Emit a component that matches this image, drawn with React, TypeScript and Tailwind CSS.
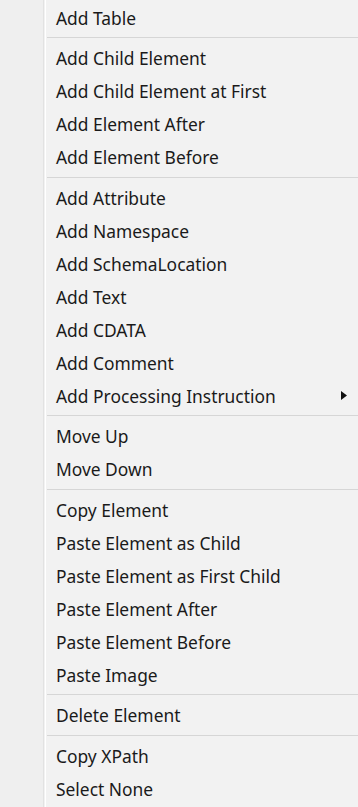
const groups: { label: string; sub?: boolean }[][] = [
  [{ label: "Add Table" }],
  [
    { label: "Add Child Element" },
    { label: "Add Child Element at First" },
    { label: "Add Element After" },
    { label: "Add Element Before" },
  ],
  [
    { label: "Add Attribute" },
    { label: "Add Namespace" },
    { label: "Add SchemaLocation" },
    { label: "Add Text" },
    { label: "Add CDATA" },
    { label: "Add Comment" },
    { label: "Add Processing Instruction", sub: true },
  ],
  [{ label: "Move Up" }, { label: "Move Down" }],
  [
    { label: "Copy Element" },
    { label: "Paste Element as Child" },
    { label: "Paste Element as First Child" },
    { label: "Paste Element After" },
    { label: "Paste Element Before" },
    { label: "Paste Image" },
  ],
  [{ label: "Delete Element" }],
  [{ label: "Copy XPath" }, { label: "Select None" }],
];

export default function App() {
  return (
    <div
      className="relative w-[358px] h-[807px] overflow-hidden bg-[#f2f2f2] text-[#1a1a1a]"
      style={{ fontFamily: '"Noto Sans", "Noto Sans CJK KR", sans-serif' }}
    >
      {/* icon gutter */}
      <div className="absolute left-0 top-0 bottom-0 w-[44px] bg-[#efefef] border-r border-[#e2e2e2]" />
      <div className="absolute left-[45px] top-0 bottom-0 w-px bg-white" />

      <div className="relative pt-[1px]">
        {groups.map((group, gi) => (
          <div key={gi}>
            {gi > 0 && <div className="ml-[47px] mt-[3px] mb-[3.5px] h-px bg-[#d6d6d6]" />}
            {group.map((item) => (
              <div key={item.label} className="flex items-center h-[33px] pl-[56px] pr-[10px]">
                <span className="flex-1 text-[17.4px] leading-none translate-y-px">{item.label}</span>
                {item.sub && (
                  <svg width="6" height="9" viewBox="0 0 6 9" className="mr-[1px]">
                    <path d="M0 0 L6 4.5 L0 9 Z" fill="#111" />
                  </svg>
                )}
              </div>
            ))}
          </div>
        ))}
      </div>
    </div>
  );
}
